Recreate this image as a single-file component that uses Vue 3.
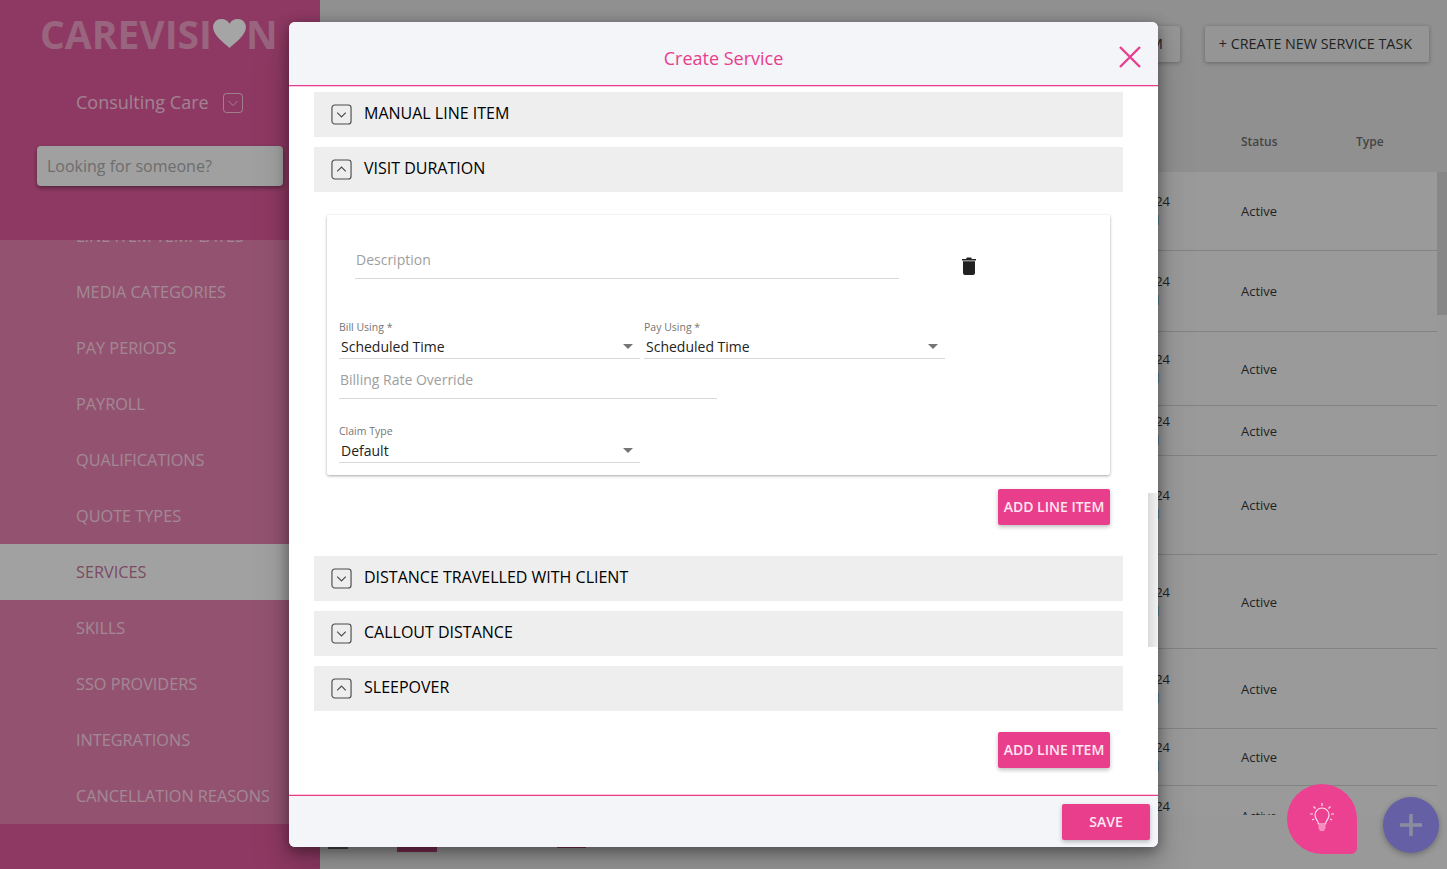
<script setup>
const navItems = [
  'LINE ITEM TEMPLATES',
  'MEDIA CATEGORIES',
  'PAY PERIODS',
  'PAYROLL',
  'QUALIFICATIONS',
  'QUOTE TYPES',
  'SERVICES',
  'SKILLS',
  'SSO PROVIDERS',
  'INTEGRATIONS',
  'CANCELLATION REASONS',
]

const rows = [79, 81, 74, 50, 99, 94, 80, 57, 60]
</script>

<template>
  <div class="page">
    <aside class="sidebar">
      <div class="side-head">
        <div class="logo">
          <span>CAREVISI</span>
          <svg class="heart" viewBox="0 0 34 30">
            <path d="M17 30C12 25 0 17 0 8.500C0 3.500 4 0 8.500 0C12 0 15.500 2 17 5C18.500 2 22 0 25.500 0C30 0 34 3.500 34 8.500C34 17 22 25 17 30Z" fill="#f4f4f4" />
          </svg>
          <span>N</span>
        </div>
        <div class="org">
          <span>Consulting Care</span>
          <span class="org-toggle">
            <svg viewBox="0 0 20 20" width="20" height="20">
              <rect x="0.500" y="0.500" width="19" height="19" rx="3" fill="none" stroke="#fff" stroke-opacity="0.6" />
              <path d="M5.500 8l4.500 4.500L14.500 8" fill="none" stroke="#fff" stroke-opacity="0.6" />
            </svg>
          </span>
        </div>
        <div class="search">Looking for someone?</div>
      </div>
      <nav class="nav">
        <a v-for="item in navItems"
           :key="item"
           class="nav-item"
           :class="{ active: item === 'SERVICES' }">{{ item }}</a>
      </nav>
    </aside>

    <main class="main">
      <div class="toolbar">
        <button class="tool-btn">+ CREATE NEW SERVICE TEAM</button>
        <button class="tool-btn">+ CREATE NEW SERVICE TASK</button>
      </div>
      <div class="table-head">
        <span class="col-date">Updated</span>
        <span class="col-status">Status</span>
        <span>Type</span>
      </div>
      <div class="table-wrap">
        <div class="table-body">
          <div v-for="(height, i) in rows"
               :key="i"
               class="row"
               :style="{ height: height + 'px' }">
            <span class="col-date">
              12/03/2024<br>Janice Hill
            </span>
            <span class="col-status">Active</span>
          </div>
        </div>
        <div class="table-scroll"></div>
      </div>
      <div class="pager">
        <span class="page-btn plain"></span>
        <span class="page-btn current"></span>
        <span class="page-btn small"></span>
      </div>
      <button class="add-fab">
        <svg viewBox="0 0 28 28" width="28" height="28">
          <path d="M14 3v22M3 14h22" stroke="#cfcfea" stroke-width="3.500" />
        </svg>
      </button>
    </main>

    <div class="backdrop"></div>

    <section class="modal">
      <header class="modal-head">
        <h2>Create Service</h2>
        <svg class="close" viewBox="0 0 22 22" width="22" height="22">
          <path d="M1 1l20 20M21 1L1 21" stroke="#e83e8c" stroke-width="2.400" />
        </svg>
      </header>

      <div class="modal-body">
        <div class="acc">
          <svg class="acc-icon" viewBox="0 0 22 22"><rect x="1" y="1" width="20" height="20" rx="3" /><path d="M6.500 9l4.500 4.500L15.500 9" /></svg>
          <span>MANUAL LINE ITEM</span>
        </div>
        <div class="acc">
          <svg class="acc-icon" viewBox="0 0 22 22"><rect x="1" y="1" width="20" height="20" rx="3" /><path d="M6.500 13L11 8.500l4.500 4.500" /></svg>
          <span>VISIT DURATION</span>
        </div>

        <div class="panel">
          <div class="card">
            <div class="desc-row">
              <div class="field desc">Description</div>
              <svg class="trash" viewBox="0 0 14 18" width="14" height="18">
                <path d="M0 2h4l1-1.500h4L10 2h4v1.600H0zM1 4.300h12V16a2 2 0 0 1-2 2H3a2 2 0 0 1-2-2z" fill="#212121" />
              </svg>
            </div>
            <div class="select-row">
              <div class="select bill">
                <label>Bill Using *</label>
                <div class="select-value">Scheduled Time<i class="caret"></i></div>
              </div>
              <div class="select pay">
                <label>Pay Using *</label>
                <div class="select-value">Scheduled Time<i class="caret"></i></div>
              </div>
            </div>
            <div class="field rate">Billing Rate Override</div>
            <div class="select claim">
              <label>Claim Type</label>
              <div class="select-value">Default<i class="caret"></i></div>
            </div>
          </div>
          <div class="actions">
            <button class="pink-btn">ADD LINE ITEM</button>
          </div>
        </div>

        <div class="acc">
          <svg class="acc-icon" viewBox="0 0 22 22"><rect x="1" y="1" width="20" height="20" rx="3" /><path d="M6.500 9l4.500 4.500L15.500 9" /></svg>
          <span>DISTANCE TRAVELLED WITH CLIENT</span>
        </div>
        <div class="acc">
          <svg class="acc-icon" viewBox="0 0 22 22"><rect x="1" y="1" width="20" height="20" rx="3" /><path d="M6.500 9l4.500 4.500L15.500 9" /></svg>
          <span>CALLOUT DISTANCE</span>
        </div>
        <div class="acc">
          <svg class="acc-icon" viewBox="0 0 22 22"><rect x="1" y="1" width="20" height="20" rx="3" /><path d="M6.500 13L11 8.500l4.500 4.500" /></svg>
          <span>SLEEPOVER</span>
        </div>
        <div class="actions last">
          <button class="pink-btn">ADD LINE ITEM</button>
        </div>

        <div class="modal-scroll"></div>
      </div>

      <footer class="modal-foot">
        <button class="pink-btn save">SAVE</button>
      </footer>
    </section>

    <button class="idea-fab">
      <svg viewBox="0 0 28 30" width="28" height="30" fill="none" stroke="#ffdcec" stroke-width="1.200">
        <path d="M14 1v3M5.500 4.500l2 2M22.500 4.500l-2 2M2 12h3M23 12h3M4 18l2-1M24 18l-2-1" />
        <path d="M10.500 22c0-3-3.500-4.500-3.500-9a7 7 0 0 1 14 0c0 4.500-3.500 6-3.500 9z" />
        <path d="M10.500 24h7M10.500 26h7M11.500 28h5" />
      </svg>
    </button>
  </div>
</template>

<style>
html, body {
  margin: 0;
  overflow: hidden;
}
</style>

<style scoped>
.page {
  display: flex;
  position: relative;
  width: 1447px;
  height: 869px;
  overflow: hidden;
  font-family: "Open Sans", "Liberation Sans", sans-serif;
  background: #e2e2e2;
}

/* sidebar */
.sidebar {
  width: 320px;
  flex: none;
  background: #d15592;
}

.side-head {
  height: 240px;
  box-sizing: border-box;
  padding-top: 10px;
}

.logo {
  display: flex;
  align-items: center;
  padding-left: 40px;
  height: 50px;
  margin-top: -2px;
  font-size: 39px;
  font-weight: 700;
  color: rgba(255, 255, 255, 0.38);
}

.heart {
  width: 33px;
  height: 29px;
  margin: 0 0 0 1px;
}

.org {
  display: flex;
  align-items: center;
  gap: 14px;
  margin: 19px 0 0 76px;
  height: 52px;
  font-size: 18px;
  color: rgba(255, 255, 255, 0.65);
}

.org span:first-child {
  margin-top: -2px;
}

.org-toggle {
  display: flex;
}

.search {
  display: flex;
  align-items: center;
  margin: 17px 0 0 37px;
  width: 246px;
  height: 40px;
  box-sizing: border-box;
  padding-left: 10px;
  border-radius: 4px;
  background: #ececec;
  color: #a2a2a2;
  font-size: 16px;
  box-shadow: 0 2px 4px rgba(0, 0, 0, 0.4);
}

.nav {
  height: 584px;
  overflow: hidden;
  background: #d97ba6;
}

.nav-item {
  display: flex;
  align-items: center;
  height: 56px;
  padding-left: 76px;
  font-size: 16.250px;
  color: rgba(255, 255, 255, 0.6);
}

.nav-item:first-child {
  margin-top: -32px;
}

.nav-item.active {
  background: #eeeeee;
  color: #b66e93;
}

/* page behind the dialog */
.main {
  flex: 1;
  position: relative;
  min-width: 0;
}

.toolbar {
  display: flex;
  justify-content: flex-end;
  gap: 25px;
  padding: 26px 18px 0 0;
  background: #d4d4d4;
}

.tool-btn {
  height: 36px;
  padding: 0 17px 2px 14px;
  border: none;
  border-radius: 2px;
  background: #dcdcdc;
  color: #333;
  font: 14.300px "Open Sans", sans-serif;
  box-shadow: 0 1px 4px rgba(0, 0, 0, 0.3);
}

.table-head {
  display: flex;
  align-items: flex-end;
  height: 110px;
  box-sizing: border-box;
  padding-bottom: 22px;
  background: #d4d4d4;
  font-size: 12px;
  font-weight: 600;
  color: #666;
}

.col-date {
  width: 921px;
  flex: none;
  box-sizing: border-box;
  padding-left: 781px;
  font-size: 13px;
  line-height: 19px;
  color: #333;
}

.table-head .col-date {
  visibility: hidden;
}

.col-status {
  width: 115px;
  flex: none;
}

.table-wrap {
  display: flex;
  height: 643px;
  overflow: hidden;
}

.table-body {
  width: 1117px;
  flex: none;
}

.row {
  display: flex;
  align-items: center;
  border-bottom: 1px solid #c2c2c2;
  box-sizing: border-box;
  background: #e4e4e4;
  font-size: 13px;
  color: #333;
}

.table-scroll {
  width: 10px;
  height: 143px;
  background: #c8c8c8;
}

.pager {
  display: flex;
  padding: 9px 0 0 8px;
}

.page-btn {
  height: 28px;
  display: block;
}

.page-btn.plain {
  width: 20px;
  height: 25px;
  background: #666;
}

.page-btn.current {
  width: 40px;
  margin-left: 49px;
  background: #b8427d;
}

.page-btn.small {
  width: 29px;
  height: 24px;
  margin-left: 120px;
  background: #b8427d;
}

.add-fab {
  position: absolute;
  right: 8px;
  bottom: 16px;
  display: flex;
  align-items: center;
  justify-content: center;
  width: 56px;
  height: 56px;
  padding: 0;
  border: none;
  border-radius: 50%;
  background: #968df3;
  box-shadow: 0 2px 6px rgba(0, 0, 0, 0.3);
}

.backdrop {
  position: absolute;
  inset: 0;
  background: rgba(0, 0, 0, 0.32);
}

/* dialog */
.modal {
  position: absolute;
  left: 289px;
  top: 22px;
  display: flex;
  flex-direction: column;
  width: 869px;
  height: 825px;
  border-radius: 6px;
  overflow: hidden;
  background: #fff;
  box-shadow: 0 4px 14px 1px rgba(0, 0, 0, 0.4), 0 24px 38px 3px rgba(0, 0, 0, 0.14);
}

.modal-head {
  position: relative;
  flex: none;
  height: 64px;
  box-sizing: border-box;
  border-bottom: 1px solid #e83e8c;
  background: #f3f5f9;
  box-shadow: 0 1px 0 rgba(232, 62, 140, 0.3);
}

.modal-head h2 {
  margin: 0;
  padding-top: 23px;
  text-align: center;
  font-size: 18px;
  line-height: 27px;
  font-weight: 400;
  color: #e83e8c;
}

.close {
  position: absolute;
  right: 17px;
  top: 24px;
}

.modal-body {
  position: relative;
  flex: 1;
  min-height: 0;
  overflow: hidden;
  padding: 6px 35px 0 25px;
}

.acc {
  display: flex;
  align-items: center;
  gap: 12px;
  height: 45px;
  margin-bottom: 10px;
  padding-left: 17px;
  background: #eee;
  font-size: 16px;
  color: #000;
}

.acc span {
  margin-top: -4px;
}

.acc-icon {
  width: 21px;
  height: 21px;
  margin-top: -1px;
  fill: none;
  stroke: #4a4a4a;
  stroke-width: 1.200;
}

.panel {
  padding: 13px 13px 0;
}

.card {
  height: 260px;
  box-sizing: border-box;
  padding: 1px 0 0 12px;
  border-radius: 2px;
  background: #fff;
  box-shadow: 0 1px 3px rgba(0, 0, 0, 0.35);
}

.desc-row {
  display: flex;
  align-items: center;
}

.field {
  box-sizing: border-box;
  font-size: 14px;
  line-height: 20px;
  color: #9e9e9e;
  border-bottom: 1px solid #d8d8d8;
}

.desc {
  width: 544px;
  height: 42px;
  margin: 21px 0 0 16px;
  padding: 13px 0 0 1px;
}

.trash {
  margin: 36px 0 0 63px;
}

.select-row {
  display: flex;
  gap: 4px;
  margin-top: 41px;
}

.select {
  width: 301px;
}

.select label {
  display: block;
  font-size: 10.500px;
  line-height: 14px;
  color: #757575;
}

.select-value {
  display: flex;
  align-items: center;
  justify-content: space-between;
  height: 25px;
  padding: 0 7px 0 2px;
  box-sizing: border-box;
  border-bottom: 1px solid #d8d8d8;
  font-size: 14px;
  color: #222;
}

.caret {
  width: 0;
  height: 0;
  border: 5px solid transparent;
  border-top-color: #757575;
  border-bottom: 0;
}

.rate {
  width: 378px;
  height: 40px;
  padding: 11px 0 0 1px;
}

.claim {
  margin-top: 25px;
}

.actions {
  display: flex;
  justify-content: flex-end;
  padding-top: 14px;
  margin-bottom: 31px;
}

.actions.last {
  padding-top: 11px;
  margin-right: 13px;
  margin-bottom: 0;
}

.pink-btn {
  height: 36px;
  width: 112px;
  padding: 0 0 2px;
  border: none;
  border-radius: 2px;
  background: #e83e8c;
  color: #ffe6f1;
  font: 600 14px "Open Sans", sans-serif;
  box-shadow: 0 2px 4px rgba(0, 0, 0, 0.25);
}

.modal-scroll {
  position: absolute;
  right: 0;
  top: 407px;
  width: 10px;
  height: 154px;
  background: linear-gradient(90deg, #dadada, #f2f2f2);
}

.modal-foot {
  flex: none;
  height: 52px;
  display: flex;
  justify-content: flex-end;
  align-items: flex-start;
  padding: 8px 8px 0 0;
  box-sizing: border-box;
  border-top: 1px solid #e83e8c;
  background: #f3f5f9;
  box-shadow: 0 -1px 0 rgba(232, 62, 140, 0.3);
}

.pink-btn.save {
  width: 88px;
}

.idea-fab {
  position: absolute;
  left: 1287px;
  top: 784px;
  display: flex;
  align-items: center;
  justify-content: center;
  width: 70px;
  height: 70px;
  padding: 0 0 4px;
  border: none;
  border-radius: 50% 50% 6px 50%;
  background: #ec4090;
}
</style>
